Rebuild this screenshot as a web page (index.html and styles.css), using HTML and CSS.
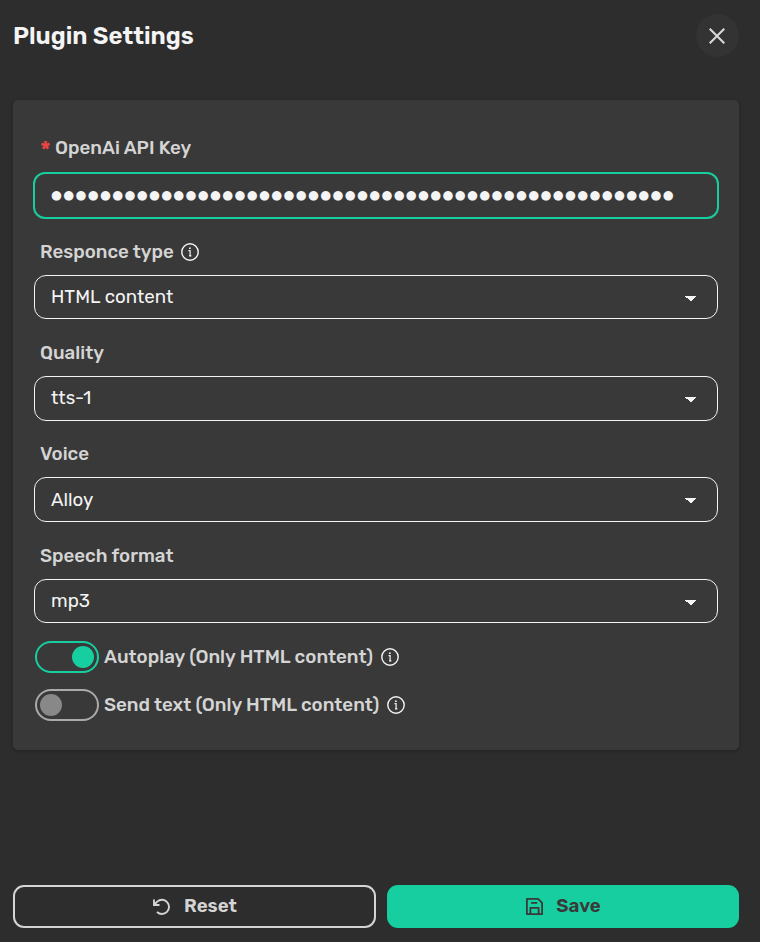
FILE: index.html
```
<!DOCTYPE html>
<html lang="en">
<head>
<meta charset="utf-8">
<title>Plugin Settings</title>
<link rel="stylesheet" href="styles.css">
</head>
<body>
<svg class="defs" width="0" height="0">
  <symbol id="info" viewBox="0 0 18 18"><circle cx="9" cy="9" r="8.2" fill="none" stroke="currentColor" stroke-width="1.4"/><path d="M7.500 7.600h1.600v5.200M8 12.800h2.400" fill="none" stroke="currentColor" stroke-width="1.2"/><path d="M8 4.400h1.700v1.600h-1.700z" fill="currentColor"/></symbol>
  <symbol id="caret" viewBox="0 0 11 5"><path d="M0 0h11v1h-1v1h-1v1h-1v1h-1v1H5v-1H4V3H3V2H1V1H0z" fill="currentColor" shape-rendering="crispEdges"/></symbol>
</svg>
<div class="dialog">
  <header class="header">
    <h1 class="title">Plugin Settings</h1>
    <button class="close" aria-label="Close"><svg width="16" height="16" viewBox="0 0 16 16"><path d="M.7.7l14.600 14.600M15.300.7L.7 15.300" fill="none" stroke="currentColor" stroke-width="2.100"/></svg></button>
  </header>
  <main class="panel">
    <div class="field key">
      <label class="label"><span class="required">*</span><span>OpenAi API Key</span></label>
      <div class="control focused"><span class="mask">●●●●●●●●●●●●●●●●●●●●●●●●●●●●●●●●●●●●●●●●●●●●●●●●●●●</span></div>
    </div>
    <div class="field">
      <label class="label"><span>Responce type</span><svg class="info"><use href="#info"/></svg></label>
      <div class="control"><span>HTML content</span><svg class="caret"><use href="#caret"/></svg></div>
    </div>
    <div class="field">
      <label class="label"><span>Quality</span></label>
      <div class="control"><span>tts-1</span><svg class="caret"><use href="#caret"/></svg></div>
    </div>
    <div class="field">
      <label class="label"><span>Voice</span></label>
      <div class="control"><span>Alloy</span><svg class="caret"><use href="#caret"/></svg></div>
    </div>
    <div class="field">
      <label class="label"><span>Speech format</span></label>
      <div class="control"><span>mp3</span><svg class="caret"><use href="#caret"/></svg></div>
    </div>
    <div class="options">
      <div class="option"><span class="switch on"><i class="knob"></i></span><span class="caption">Autoplay (Only HTML content)</span><svg class="info"><use href="#info"/></svg></div>
      <div class="option"><span class="switch"><i class="knob"></i></span><span class="caption">Send text (Only HTML content)</span><svg class="info"><use href="#info"/></svg></div>
    </div>
  </main>
  <footer class="footer">
    <button class="button reset"><svg width="18" height="18" viewBox="0 0 18 18"><path d="M1 1.500v5.500h5.500M1.500 6.500L4.200 3.600A7.100 7.100 0 1 1 4 14" fill="none" stroke="currentColor" stroke-width="1.900"/></svg><span>Reset</span></button>
    <button class="button save"><svg width="17" height="17" viewBox="0 0 17 17"><path d="M.9.9h11.200L16.100 4.900V16.100H.9zM4.400 16V9.800h8.200V16M5 4.800h6.200" fill="none" stroke="currentColor" stroke-width="1.800" stroke-linejoin="round"/></svg><span>Save</span></button>
  </footer>
</div>
</body>
</html>
```
FILE: styles.css
```
* { box-sizing: border-box; }
body { margin: 0; background: #2d2d2d; color: #f4f4f4; font-family: Rubik, Roboto, "Liberation Sans", sans-serif; }
.defs { display: block; }
.dialog { height: 942px; padding: 14px 21px 14px 13px; display: flex; flex-direction: column; }
.header { height: 86px; display: flex; align-items: flex-start; justify-content: space-between; }
.title { margin: 0; font-size: 24px; line-height: 44px; font-weight: 600; white-space: nowrap; }
.close { width: 43px; height: 43px; padding: 1px 1px 0 0; border: 0; border-radius: 50%; background: #333; color: #d6d6d6; display: grid; place-items: center; }
.panel { height: 650px; padding: 33px 21px 0; border-radius: 5px; background: #393939; box-shadow: 0 1px 4px rgba(0,0,0,.25); }
.field { height: 101.25px; }
.field.key { height: 103.75px; }
.label { height: 38px; padding-left: 6px; display: flex; align-items: flex-start; color: #d4d4d4; font-size: 18.72px; line-height: 30px; font-weight: 500; white-space: nowrap; }
.required { width: 15px; color: #f04545; font-size: 24px; line-height: 34px; }
.control { height: 44.5px; padding: 0 21px 0 16px; border: 1px solid #f4f4f4; border-radius: 12px; display: flex; align-items: center; justify-content: space-between; font-size: 18.72px; white-space: nowrap; }
.key .label { height: 39px; }
.control.focused { height: 47px; margin: 0 -1px; padding-bottom: 3px; border: 2px solid #17cea0; }
.mask { font-family: "DejaVu Sans", sans-serif; font-size: 12.5px; letter-spacing: 1.33px; }
.caret { width: 11px; height: 5px; margin-top: 2.5px; }
.info { width: 18px; height: 18px; color: #f4f4f4; margin-left: 7px; }
.label .info { margin-top: 6px; }
.options { margin-top: -8.75px; }
.option { height: 48px; padding-left: 1px; display: flex; align-items: center; color: #d4d4d4; font-size: 18.75px; font-weight: 500; white-space: nowrap; }
.caption { padding-bottom: 1px; }
.option .info { margin-left: 8px; }
.switch { width: 64px; height: 32px; margin-right: 5px; padding: 0 3px; border: 2px solid #aaa; border-radius: 16px; display: flex; align-items: center; }
.knob { width: 22px; height: 22px; border-radius: 50%; background: #888; }
.switch.on { border-color: #17cea0; justify-content: flex-end; }
.on .knob { background: #17cea0; }
.footer { margin-top: auto; display: grid; grid-template-columns: 363px 352px; gap: 11px; }
.button { height: 43px; padding: 0; border-radius: 11px; display: flex; align-items: center; justify-content: center; font: 600 18.72px Rubik, Roboto, sans-serif; }
.button span { padding-bottom: 2px; }
.reset { padding-left: 1px; border: 2px solid #d4d4d4; background: transparent; color: #d4d4d4; gap: 13px; }
.save { padding-left: 1px; border: 0; background: #17cea0; color: #393939; gap: 13px; }
```
